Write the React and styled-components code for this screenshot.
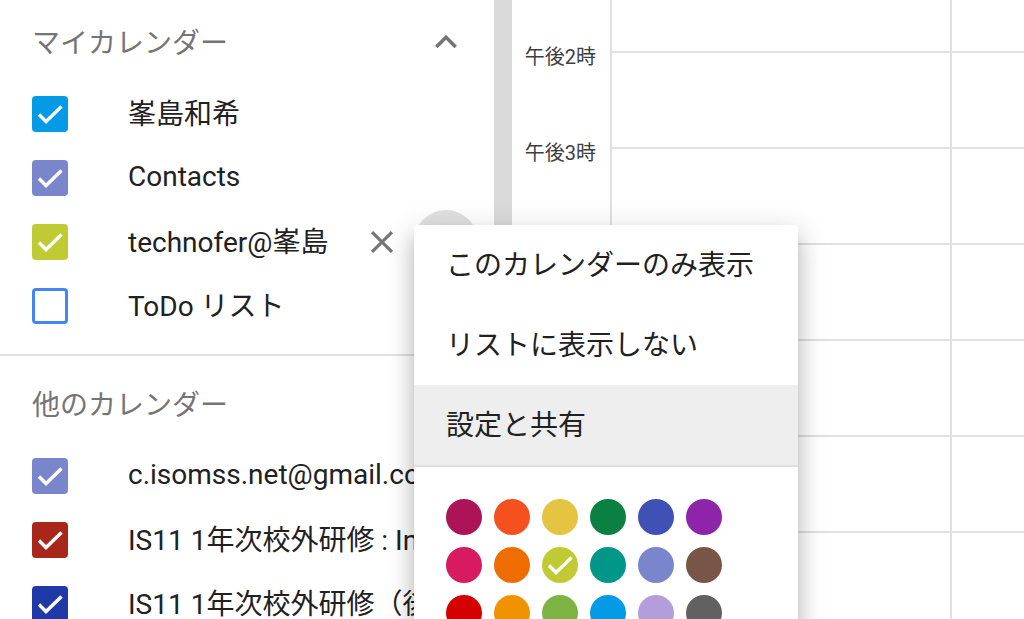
import React from "react";
import styled, { createGlobalStyle } from "styled-components";

const GlobalStyle = createGlobalStyle`
  html, body {
    margin: 0;
    padding: 0;
    overflow: hidden;
    background: #fff;
  }
  body {
    font-family: Roboto, "Noto Sans CJK JP", sans-serif;
    color: #212121;
  }
`;

const Page = styled.div`
  position: relative;
  display: flex;
  width: 1024px;
  height: 619px;
  overflow: hidden;
  background: #fff;
`;

const Sidebar = styled.aside`
  width: 494px;
  flex-shrink: 0;
  overflow: hidden;
`;

// list is scrolled a few pixels
const SidebarInner = styled.div`
  margin-top: -6px;
`;

const Section = styled.section`
  padding: 8px 0 16px;

  & + & {
    border-top: 2px solid #e0e0e0;
  }
`;

const SectionHeader = styled.div`
  display: flex;
  align-items: center;
  justify-content: space-between;
  height: 80px;
  padding: 0 16px 0 32px;
`;

const SectionTitle = styled.span`
  font-size: 28px;
  color: #757575;
  padding-bottom: 3px;
`;

const IconButton = styled.button`
  width: 64px;
  height: 64px;
  padding: 0;
  border: none;
  border-radius: 50%;
  flex-shrink: 0;
  display: flex;
  align-items: center;
  justify-content: center;
  color: #757575;
  background: ${(p) => (p.$hover ? "#e0e0e0" : "transparent")};
`;

const CalendarRow = styled.div`
  display: flex;
  align-items: center;
  height: 64px;
  padding: 0 16px 0 32px;
`;

const Box = styled.span`
  width: 36px;
  height: 36px;
  flex-shrink: 0;
  box-sizing: border-box;
  border-radius: 4px;
  display: flex;
  align-items: center;
  justify-content: center;
  background: ${(p) => (p.$checked ? p.$color : "#fff")};
  border: ${(p) => (p.$checked ? "none" : `3px solid ${p.$color}`)};
`;

const Label = styled.span`
  flex: 1;
  min-width: 0;
  margin-left: 60px;
  padding-bottom: 4px;
  font-size: 28px;
  color: #212121;
  white-space: nowrap;
  overflow: hidden;
`;

const Scrollbar = styled.div`
  width: 18px;
  flex-shrink: 0;
  background: #dadada;
`;

const TimeColumn = styled.div`
  width: 98px;
  flex-shrink: 0;
  margin-top: -49px;
  border-right: 2px solid #e0e0e0;
`;

const TimeSlot = styled.div`
  height: 96px;
  padding-right: 14px;
  text-align: right;
  font-size: 20px;
  line-height: 20px;
  color: #3c4043;
`;

const DayColumn = styled.div`
  width: 338px;
  flex-shrink: 0;
  margin-top: -45px;
  border-right: 2px solid #e0e0e0;
`;

const HourCell = styled.div`
  height: 96px;
  box-sizing: border-box;
  border-top: 2px solid #e0e0e0;
`;

const Menu = styled.div`
  position: absolute;
  left: 414px;
  top: 225px;
  width: 384px;
  background: #fff;
  border-radius: 4px;
  box-shadow: 0 16px 20px 2px rgba(0, 0, 0, 0.14),
    0 6px 28px 4px rgba(0, 0, 0, 0.12), 0 10px 10px -6px rgba(0, 0, 0, 0.2);
`;

const MenuItem = styled.div`
  height: 80px;
  box-sizing: border-box;
  display: flex;
  align-items: center;
  padding: 0 32px 4px;
  font-size: 28px;
  color: #212121;
  background: ${(p) => (p.$active ? "#eeeeee" : "transparent")};
`;

const MenuDivider = styled.div`
  height: 2px;
  background: #e0e0e0;
`;

const Swatches = styled.div`
  display: grid;
  grid-template-columns: repeat(6, 36px);
  gap: 12px;
  padding: 32px 32px 16px;
`;

const Swatch = styled.span`
  width: 36px;
  height: 36px;
  border-radius: 50%;
  display: flex;
  align-items: center;
  justify-content: center;
  background: ${(p) => p.$color};
`;

const Check = ({ size = 36 }) => (
  <svg width={size} height={size} viewBox="0 0 36 36">
    <polyline
      points="7,18.5 14,25.5 29.5,10.5"
      fill="none"
      stroke="#fff"
      strokeWidth="3.4"
    />
  </svg>
);

const ChevronUp = () => (
  <svg width="44" height="44" viewBox="0 0 24 24" fill="currentColor">
    <path d="M12 8l-6 6 1.41 1.41L12 10.83l4.59 4.58L18 14z" />
  </svg>
);

const CloseIcon = () => (
  <svg width="38" height="38" viewBox="0 0 24 24" fill="currentColor">
    <path d="M19 6.41L17.59 5 12 10.59 6.41 5 5 6.41 10.59 12 5 17.59 6.41 19 12 13.41 17.59 19 19 17.59 13.41 12z" />
  </svg>
);

const myCalendars = [
  { name: "峯島和希", color: "#039be5", checked: true },
  { name: "Contacts", color: "#7986cb", checked: true },
  { name: "technofer@峯島", color: "#c0ca33", checked: true, hovered: true },
  { name: "ToDo リスト", color: "#4285f4", checked: false },
];

const otherCalendars = [
  { name: "c.isomss.net@gmail.com", color: "#7986cb", checked: true },
  { name: "IS11 1年次校外研修 : Introduction", color: "#a8271a", checked: true },
  { name: "IS11 1年次校外研修（後期）", color: "#1f3aa8", checked: true },
];

const palette = [
  "#ad1457", "#f4511e", "#e4c441", "#0b8043", "#3f51b5", "#8e24aa",
  "#d81b60", "#ef6c00", "#c0ca33", "#009688", "#7986cb", "#795548",
  "#d50000", "#f09300", "#7cb342", "#039be5", "#b39ddb", "#616161",
];

const times = ["午後1時", "午後2時", "午後3時", "午後4時", "午後5時", "午後6時", "午後7時"];

const CalendarItem = ({ item }) => (
  <CalendarRow>
    <Box $color={item.color} $checked={item.checked}>
      {item.checked && <Check />}
    </Box>
    <Label>{item.name}</Label>
    {item.hovered && (
      <>
        <IconButton>
          <CloseIcon />
        </IconButton>
        <IconButton $hover />
      </>
    )}
  </CalendarRow>
);

const App = () => {
  return (
    <Page>
      <GlobalStyle />
      <Sidebar>
        <SidebarInner>
          <Section>
            <SectionHeader>
              <SectionTitle>マイカレンダー</SectionTitle>
              <IconButton>
                <ChevronUp />
              </IconButton>
            </SectionHeader>
            {myCalendars.map((c) => (
              <CalendarItem key={c.name} item={c} />
            ))}
          </Section>
          <Section>
            <SectionHeader>
              <SectionTitle>他のカレンダー</SectionTitle>
            </SectionHeader>
            {otherCalendars.map((c) => (
              <CalendarItem key={c.name} item={c} />
            ))}
          </Section>
        </SidebarInner>
      </Sidebar>

      <Scrollbar />
      <TimeColumn>
        {times.map((t) => (
          <TimeSlot key={t}>{t}</TimeSlot>
        ))}
      </TimeColumn>
      {[0, 1].map((d) => (
        <DayColumn key={d}>
          {times.map((t) => (
            <HourCell key={t} />
          ))}
        </DayColumn>
      ))}

      <Menu>
        <MenuItem>このカレンダーのみ表示</MenuItem>
        <MenuItem>リストに表示しない</MenuItem>
        <MenuItem $active>設定と共有</MenuItem>
        <MenuDivider />
        <Swatches>
          {palette.map((c) => (
            <Swatch key={c} $color={c}>
              {c === "#c0ca33" && <Check />}
            </Swatch>
          ))}
        </Swatches>
      </Menu>
    </Page>
  );
};

export default App;
